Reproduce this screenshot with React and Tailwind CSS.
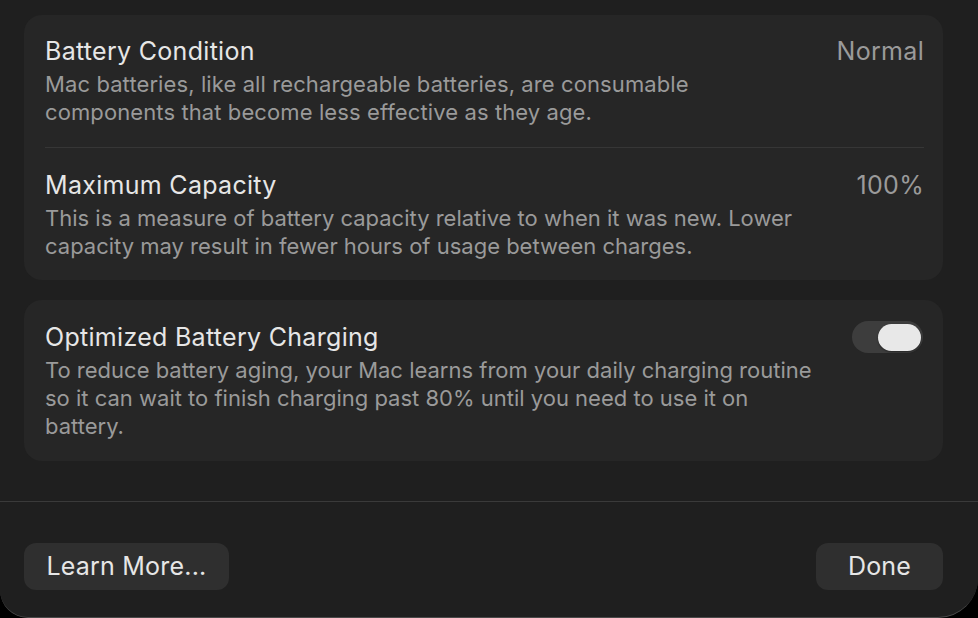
export default function App() {
  return (
    <div className="w-[978px] h-[618px] bg-black overflow-hidden">
      <div
        className="relative w-[978px] h-[618px] bg-[#1f1f1f] rounded-bl-[28px] rounded-br-[40px] border-b border-[#4a4a4a] flex flex-col text-[#e6e6e6]"
        style={{ fontFamily: 'Inter, "Noto Sans", sans-serif' }}
      >
        {/* Settings groups */}
        <div className="flex flex-col gap-[20px] pl-[24px] pr-[35px] pt-[15px]">
          <div className="bg-[#262626] rounded-[18px] pl-[21px] pr-[19px] pt-[22px] pb-[20px]">
            <div className="flex items-start justify-between pb-[21px]">
              <div>
                <div className="text-[25px] leading-[28px] tracking-[0.3px]">Battery Condition</div>
                <p className="mt-[5px] text-[22px] leading-[28px] tracking-[0.1px] text-[#9a9a9a]">
                  Mac batteries, like all rechargeable batteries, are consumable<br />
                  components that become less effective as they age.
                </p>
              </div>
              <div className="text-[25px] leading-[28px] tracking-[0.3px] text-[#9a9a9a]">Normal</div>
            </div>
            <div className="h-px bg-[#363636]" />
            <div className="flex items-start justify-between pt-[23px]">
              <div>
                <div className="text-[25px] leading-[28px] tracking-[0.3px]">Maximum Capacity</div>
                <p className="mt-[5px] text-[22px] leading-[28px] text-[#9a9a9a]">
                  This is a measure of battery capacity relative to when it was new. Lower<br />
                  capacity may result in fewer hours of usage between charges.
                </p>
              </div>
              <div className="text-[25px] leading-[28px] tracking-[0.3px] text-[#9a9a9a]">100%</div>
            </div>
          </div>

          <div className="bg-[#262626] rounded-[18px] pl-[21px] pr-[20px] pt-[23px] pb-[21px] flex items-start justify-between">
            <div>
              <div className="text-[25px] leading-[28px] tracking-[0.3px]">Optimized Battery Charging</div>
              <p className="mt-[5px] text-[22px] leading-[28px] text-[#9a9a9a]">
                To reduce battery aging, your Mac learns from your daily charging routine<br />
                so it can wait to finish charging past 80% until you need to use it on<br />
                battery.
              </p>
            </div>
            <button className="-mt-[2px] w-[71px] h-[32px] rounded-full bg-[#3d3d3d] flex items-center justify-end pr-[2px] shrink-0">
              <span className="w-[43px] h-[27px] rounded-full bg-[#e8e8e8] shadow-[0_1px_2px_rgba(0,0,0,0.4)]" />
            </button>
          </div>
        </div>

        <div className="mt-[40px] h-px bg-[#3a3a3a]" />

        {/* Footer buttons */}
        <div className="flex items-center justify-between pl-[24px] pr-[35px] pt-[41px]">
          <button className="h-[47px] w-[205px] rounded-[12px] bg-[#2f2f2f] text-[25px] tracking-[0.2px] text-[#e6e6e6]">
            Learn More...
          </button>
          <button className="h-[47px] w-[127px] rounded-[12px] bg-[#2f2f2f] text-[25px] tracking-[0.2px] text-[#e6e6e6]">
            Done
          </button>
        </div>
      </div>
    </div>
  );
}
